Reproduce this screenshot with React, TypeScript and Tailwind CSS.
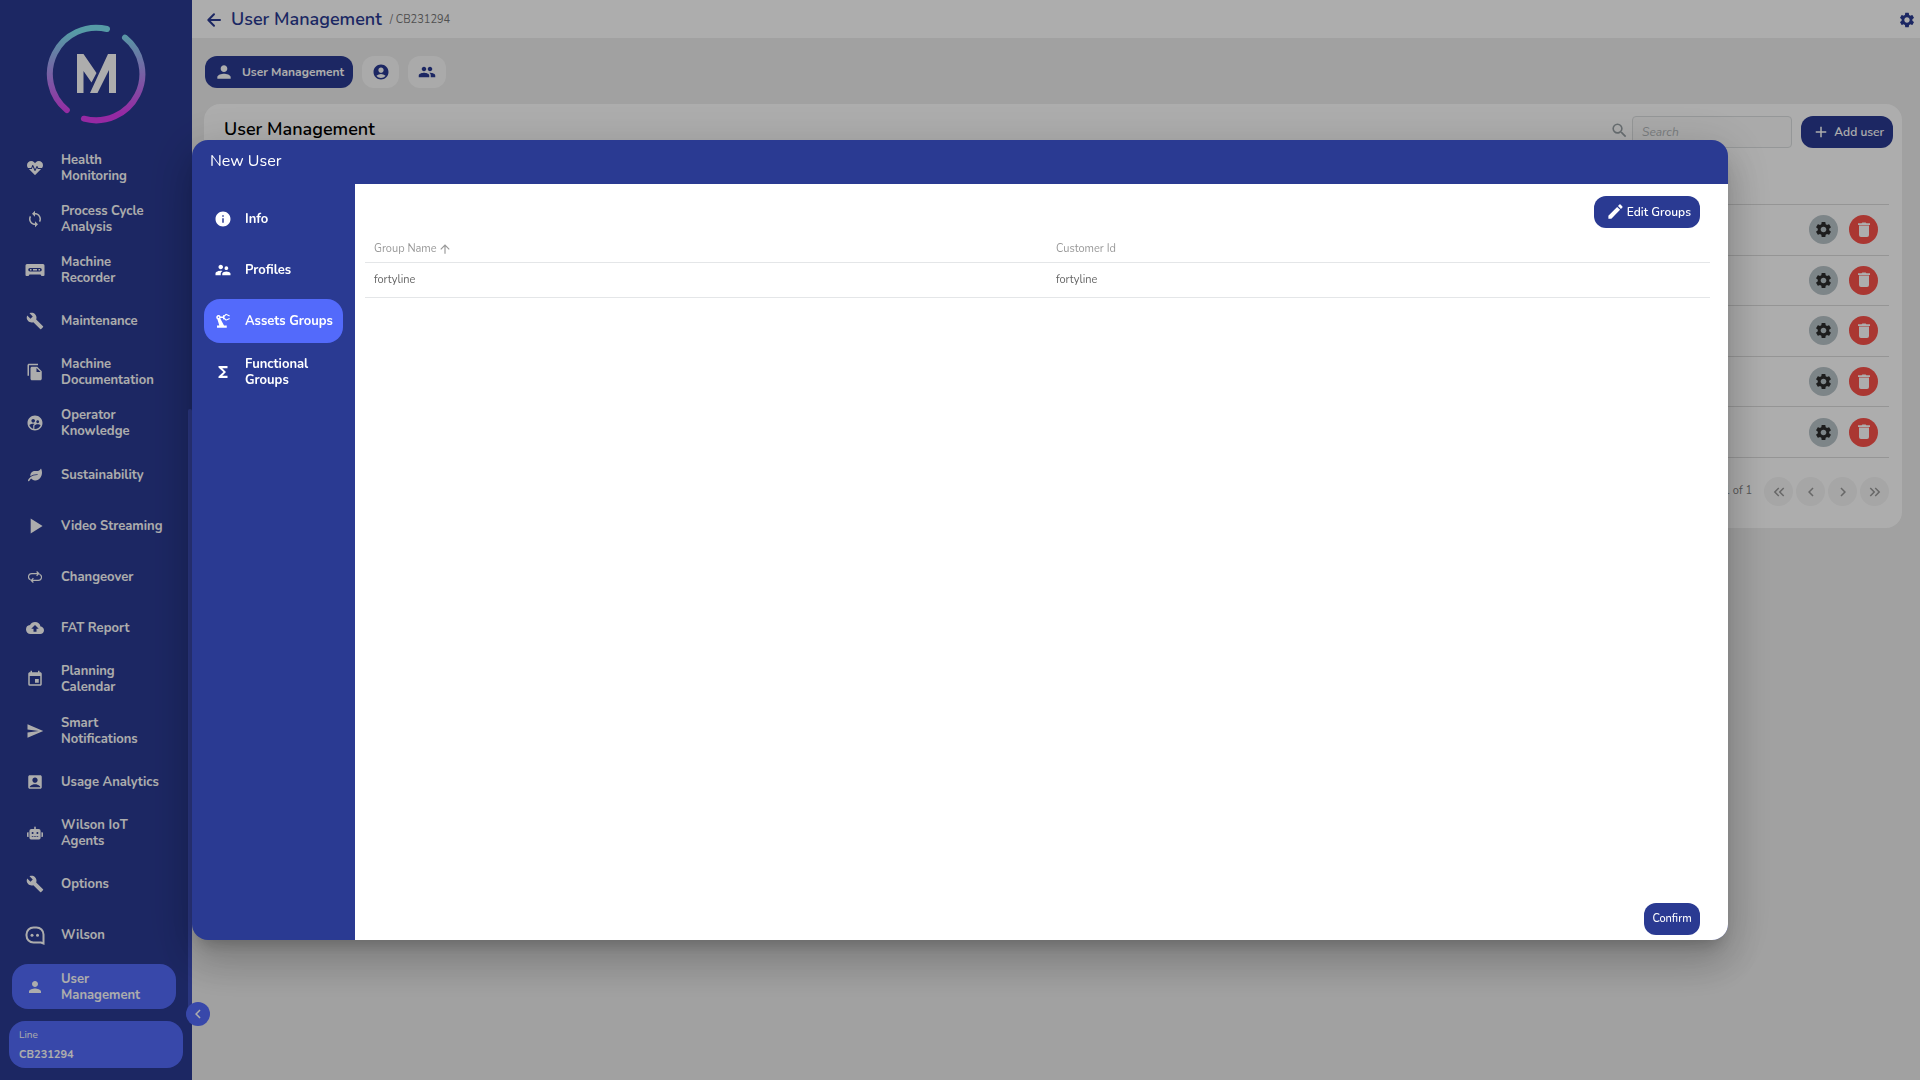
import type { ReactNode } from 'react'
import {
  MdAccountBox, MdAccountCircle, MdAdd, MdArrowUpward, MdBackup, MdBuild, MdChevronLeft,
  MdChevronRight, MdEdit, MdEvent, MdFileCopy, MdFunctions, MdGroup, MdInfo,
  MdKeyboardDoubleArrowLeft, MdKeyboardDoubleArrowRight, MdPerson, MdPlayArrow,
  MdPrecisionManufacturing, MdSearch, MdSend, MdSettings, MdSupervisedUserCircle,
  MdSupervisorAccount, MdSync,
} from 'react-icons/md'
import { FaHeartbeat, FaLeaf, FaRobot } from 'react-icons/fa'

function RecorderIcon() {
  return (
    <svg width="20" height="14" viewBox="0 0 20 14" fill="currentColor">
      <path
        fillRule="evenodd"
        d="M2 1h16a1.500 1.500 0 0 1 1.500 1.500v9.500a1 1 0 0 1-1 1h-2l-1-1.500h-11l-1 1.500h-2a1 1 0 0 1-1-1v-9.500A1.500 1.500 0 0 1 2 1zM5 5a1.800 1.800 0 1 0 0 3.600h10a1.800 1.800 0 1 0 0-3.600z"
      />
      <path d="M5 6h1.500v1.600H5zM8 6h4v1.600H8zM13.500 6H15v1.600h-1.500z" />
    </svg>
  )
}

function LoopIcon() {
  return (
    <svg width="14" height="12" viewBox="0 0 14 12" fill="none" stroke="currentColor" strokeWidth="1.200">
      <path d="M2.600 8.800A3.200 3.200 0 0 1 3.700 2.600h7M8.600 .500l2.200 2.100-2.200 2.100" />
      <path d="M11.400 3.200a3.200 3.200 0 0 1-1.100 6.200H3.300M5.400 7.300L3.200 9.400l2.200 2.100" />
    </svg>
  )
}

function WilsonIcon() {
  return (
    <svg width="20" height="19" viewBox="0 0 20 19" fill="none" stroke="currentColor" strokeWidth="2">
      <path d="M8.500 1.500h3a7 7 0 0 1 7 7v9l-2.500-1H8.500a7 7 0 0 1-7-7v-1a7 7 0 0 1 7-7z" />
      <circle cx="7" cy="9.300" r="1.500" fill="currentColor" stroke="none" />
      <circle cx="12.500" cy="9.300" r="1.500" fill="currentColor" stroke="none" />
    </svg>
  )
}

function BackIcon() {
  return (
    <svg
      width="18"
      height="18"
      viewBox="0 0 18 18"
      fill="none"
      stroke="currentColor"
      strokeWidth="2"
      strokeLinecap="round"
      strokeLinejoin="round"
    >
      <path d="M15 9H3.500M9 3.300L3.300 9 9 14.700" />
    </svg>
  )
}

function TrashIcon() {
  return (
    <svg width="18" height="18" viewBox="0 0 18 18" fill="currentColor">
      <path d="M3 2.200h3.600L7.400 1.500h3.200l.8.700H15V4H3zM4 4.500h10V14a2 2 0 0 1-2 2H6a2 2 0 0 1-2-2z" />
    </svg>
  )
}

function Logo() {
  return (
    <svg width="100" height="100" viewBox="0 0 100 100" fill="none" aria-label="Logo">
      <defs>
        <linearGradient id="ring" x1="50" y1="0" x2="50" y2="100" gradientUnits="userSpaceOnUse">
          <stop offset="0.080" stopColor="#7fe5f5" />
          <stop offset="0.900" stopColor="#de3df0" />
        </linearGradient>
      </defs>
      <g stroke="url(#ring)" strokeWidth="6" strokeLinecap="round">
        <path d="M61 5A46.400 46.400 0 0 0 20.800 86" />
        <path d="M79 13.700A46.400 46.400 0 0 1 37.900 94.700" />
      </g>
      <path fill="#fff" d="M31 30h6.500l13 19-5 9.500-8-11.500v22H31zM62 30h8v39h-7V46L51.500 69H44z" />
    </svg>
  )
}

type Entry = { label: string; icon: ReactNode; active?: boolean }

const navItems: Entry[] = [
  { label: 'Health Monitoring', icon: <FaHeartbeat size={16} /> },
  { label: 'Process Cycle Analysis', icon: <MdSync size={18} /> },
  { label: 'Machine Recorder', icon: <RecorderIcon /> },
  { label: 'Maintenance', icon: <MdBuild size={18} /> },
  { label: 'Machine Documentation', icon: <MdFileCopy size={18} /> },
  { label: 'Operator Knowledge', icon: <MdSupervisedUserCircle size={18} /> },
  { label: 'Sustainability', icon: <FaLeaf size={14} /> },
  { label: 'Video Streaming', icon: <MdPlayArrow size={26} /> },
  { label: 'Changeover', icon: <LoopIcon /> },
  { label: 'FAT Report', icon: <MdBackup size={18} /> },
  { label: 'Planning Calendar', icon: <MdEvent size={18} /> },
  { label: 'Smart Notifications', icon: <MdSend size={18} /> },
  { label: 'Usage Analytics', icon: <MdAccountBox size={18} /> },
  { label: 'Wilson IoT Agents', icon: <FaRobot size={16} /> },
  { label: 'Options', icon: <MdBuild size={18} /> },
  { label: 'Wilson', icon: <WilsonIcon /> },
  { label: 'User Management', icon: <MdPerson size={18} />, active: true },
]

const steps: Entry[] = [
  { label: 'Info', icon: <MdInfo size={18} /> },
  { label: 'Profiles', icon: <MdSupervisorAccount size={18} /> },
  { label: 'Assets Groups', icon: <MdPrecisionManufacturing size={18} />, active: true },
  { label: 'Functional Groups', icon: <MdFunctions size={18} /> },
]

const users = [1, 2, 3, 4, 5]
const groups = [{ name: 'fortyline', customer: 'fortyline' }]

function Sidebar() {
  return (
    <aside className="relative flex h-screen w-48 shrink-0 flex-col bg-[#2a3a92] pt-6 pb-3 text-white">
      <div className="flex justify-center">
        <Logo />
      </div>

      <nav className="mt-[21px] flex-1 px-3">
        <ul className="flex h-full flex-col justify-between">
          {navItems.map((item) => (
            <li key={item.label}>
              <a
                href="#"
                className={`flex h-[45px] items-center rounded-2xl ${item.active ? 'mr-1 bg-[#536afb]' : ''}`}
              >
                <span className="flex w-[46px] shrink-0 justify-center">{item.icon}</span>
                <span className="w-[108px] pl-[3px] text-[13px] leading-4 font-bold">{item.label}</span>
              </a>
            </li>
          ))}
        </ul>
      </nav>

      {/* Scroll thumb */}
      <div className="absolute top-[409px] right-0 bottom-15 w-1 rounded-full bg-[#3f50bd]" />

      <div className="mx-[9px] mt-3 flex h-[47px] flex-col justify-between rounded-2xl bg-[#536afb] px-[10px] pt-[6px] pb-[5px]">
        <span className="text-[10px] leading-4">Line</span>
        <span className="text-[11px] leading-4 font-bold">CB231294</span>
      </div>

      <button
        aria-label="Collapse menu"
        className="absolute -right-[18px] bottom-[54px] z-10 flex h-6 w-6 items-center justify-center rounded-full bg-[#536afb]"
      >
        <MdChevronLeft size={18} />
      </button>
    </aside>
  )
}

function Pager() {
  const round = 'flex h-[29px] w-[29px] items-center justify-center rounded-full bg-[#f5f5f5]'

  return (
    <div className="mt-[19px] flex items-center justify-end gap-[3px] text-[#9a9a9a]">
      <span className="mr-[9px] text-[11px] text-[#808080]">1 of 1</span>
      <button aria-label="First page" className={round}><MdKeyboardDoubleArrowLeft size={18} /></button>
      <button aria-label="Previous page" className={round}><MdChevronLeft size={18} /></button>
      <button aria-label="Next page" className={round}><MdChevronRight size={18} /></button>
      <button aria-label="Last page" className={round}><MdKeyboardDoubleArrowRight size={18} /></button>
    </div>
  )
}

function UsersPage() {
  return (
    <div className="min-w-0 flex-1">
      <header className="flex h-[38px] items-center bg-white pr-1 pl-[13px] text-[#2a3a92]">
        <button aria-label="Back" className="pt-[2px]"><BackIcon /></button>
        <h1 className="ml-2 text-[18px] font-semibold">User Management</h1>
        <span className="ml-2 pt-[2px] text-[11px] text-[#777]">/ CB231294</span>
        <button aria-label="Settings" className="ml-auto pt-[2px]"><MdSettings size={18} /></button>
      </header>

      <div className="mt-[18px] ml-[13px] flex gap-[9px] text-[#2a3a92]">
        <button className="flex h-8 w-[148px] items-center justify-center gap-2 rounded-xl bg-[#2a3a92] text-[12px] font-bold text-white">
          <MdPerson size={20} />
          User Management
        </button>
        <button aria-label="Profiles" className="flex h-8 w-[37px] items-center justify-center rounded-xl bg-[#fbfbfb]">
          <MdAccountCircle size={18} />
        </button>
        <button aria-label="Groups" className="flex h-8 w-[38px] items-center justify-center rounded-xl bg-[#fbfbfb]">
          <MdGroup size={18} />
        </button>
      </div>

      <section className="mt-4 mr-[18px] ml-3 rounded-2xl bg-white pb-[22px]">
        <div className="flex h-[100px] items-start pt-3 pr-[9px] pl-5">
          <h2 className="text-[18px] leading-[26px] font-semibold">User Management</h2>
          <label htmlFor="search" className="mt-[5px] ml-auto text-[#9aa3a7]"><MdSearch size={19} /></label>
          <input
            id="search"
            placeholder="Search"
            className="ml-[3px] h-8 w-40 rounded-sm border border-[#dcdfe0] bg-[#fbfbfb] px-[9px] text-[12px] italic placeholder:text-[#b4b9bb]"
          />
          <button className="ml-[9px] flex h-8 w-[92px] items-center justify-end gap-1 rounded-xl bg-[#2a3a92] pr-[9px] pb-px text-[12px] font-semibold text-white">
            <MdAdd size={18} />
            Add user
          </button>
        </div>

        <div className="px-[13px]">
          <table className="h-[254px] w-full border-t border-[#dcdcdc]">
            <tbody>
              {users.map((id) => (
                <tr key={id} className="border-b border-[#dcdcdc]">
                  <td className="pr-[11px]">
                    <div className="flex justify-end gap-[11px]">
                      <button aria-label="Edit user" className="flex h-[29px] w-[29px] items-center justify-center rounded-full bg-[#b9c4c9] text-[#2c2c2c]">
                        <MdSettings size={19} />
                      </button>
                      <button aria-label="Delete user" className="flex h-[29px] w-[29px] items-center justify-center rounded-full bg-[#fb524b] text-white">
                        <TrashIcon />
                      </button>
                    </div>
                  </td>
                </tr>
              ))}
            </tbody>
          </table>
          <Pager />
        </div>
      </section>
    </div>
  )
}

function NewUserDialog() {
  return (
    <div
      role="dialog"
      aria-label="New User"
      className="flex h-full w-full flex-col overflow-hidden rounded-2xl bg-[#2a3a92] text-white shadow-[0_11px_15px_-7px_rgba(0,0,0,0.2),0_24px_38px_3px_rgba(0,0,0,0.14),0_9px_46px_8px_rgba(0,0,0,0.12)]"
    >
      <h2 className="h-11 pt-2 pl-[18px] text-[16px] leading-[26px]">New User</h2>

      <div className="flex min-h-0 flex-1">
        <nav className="w-[163px] shrink-0 px-3 pt-[13px]">
          <ul className="flex flex-col gap-[7px]">
            {steps.map((step) => (
              <li key={step.label}>
                <a
                  href="#"
                  className={`flex h-11 items-center rounded-2xl ${step.active ? 'bg-[#536afb]' : ''}`}
                >
                  <span className="flex w-[38px] shrink-0 justify-center">{step.icon}</span>
                  <span className="pl-[3px] text-[13px] leading-4 font-bold">{step.label}</span>
                </a>
              </li>
            ))}
          </ul>
        </nav>

        <div className="flex flex-1 flex-col bg-white pt-3 pr-[18px] pb-[5px] pl-[10px] text-[#666]">
          <button className="mr-[10px] flex h-8 w-[106px] items-center justify-end gap-[2px] self-end rounded-xl bg-[#2a3a92] pr-[9px] pb-px text-[12px] font-semibold text-white">
            <MdEdit size={19} />
            Edit Groups
          </button>

          <table className="mt-[6px] w-full table-fixed text-left text-[11px]">
            <thead>
              <tr className="h-7 border-b border-[#e4e6e8] text-[#999]">
                <th className="w-[682px] pt-[2px] pl-[9px] font-normal">
                  <span className="flex items-center gap-px">
                    Group Name
                    <MdArrowUpward size={14} />
                  </span>
                </th>
                <th className="pt-[2px] pl-[9px] font-normal">Customer Id</th>
              </tr>
            </thead>
            <tbody>
              {groups.map((group) => (
                <tr key={group.name} className="h-[35px] border-b border-[#e4e6e8]">
                  <td className="pt-[2px] pl-[9px]">{group.name}</td>
                  <td className="pt-[2px] pl-[9px]">{group.customer}</td>
                </tr>
              ))}
            </tbody>
          </table>

          <button className="mt-auto mr-[10px] h-8 w-14 self-end rounded-xl bg-[#2a3a92] text-[11px] font-medium text-white">
            Confirm
          </button>
        </div>
      </div>
    </div>
  )
}

export default function App() {
  return (
    <div className="flex min-h-screen bg-[#ededed] font-['Nunito','Open_Sans',sans-serif]">
      <Sidebar />
      <UsersPage />

      {/* Backdrop */}
      <div className="fixed inset-0 z-20 bg-black/32 px-[10%] py-35">
        <NewUserDialog />
      </div>
    </div>
  )
}
